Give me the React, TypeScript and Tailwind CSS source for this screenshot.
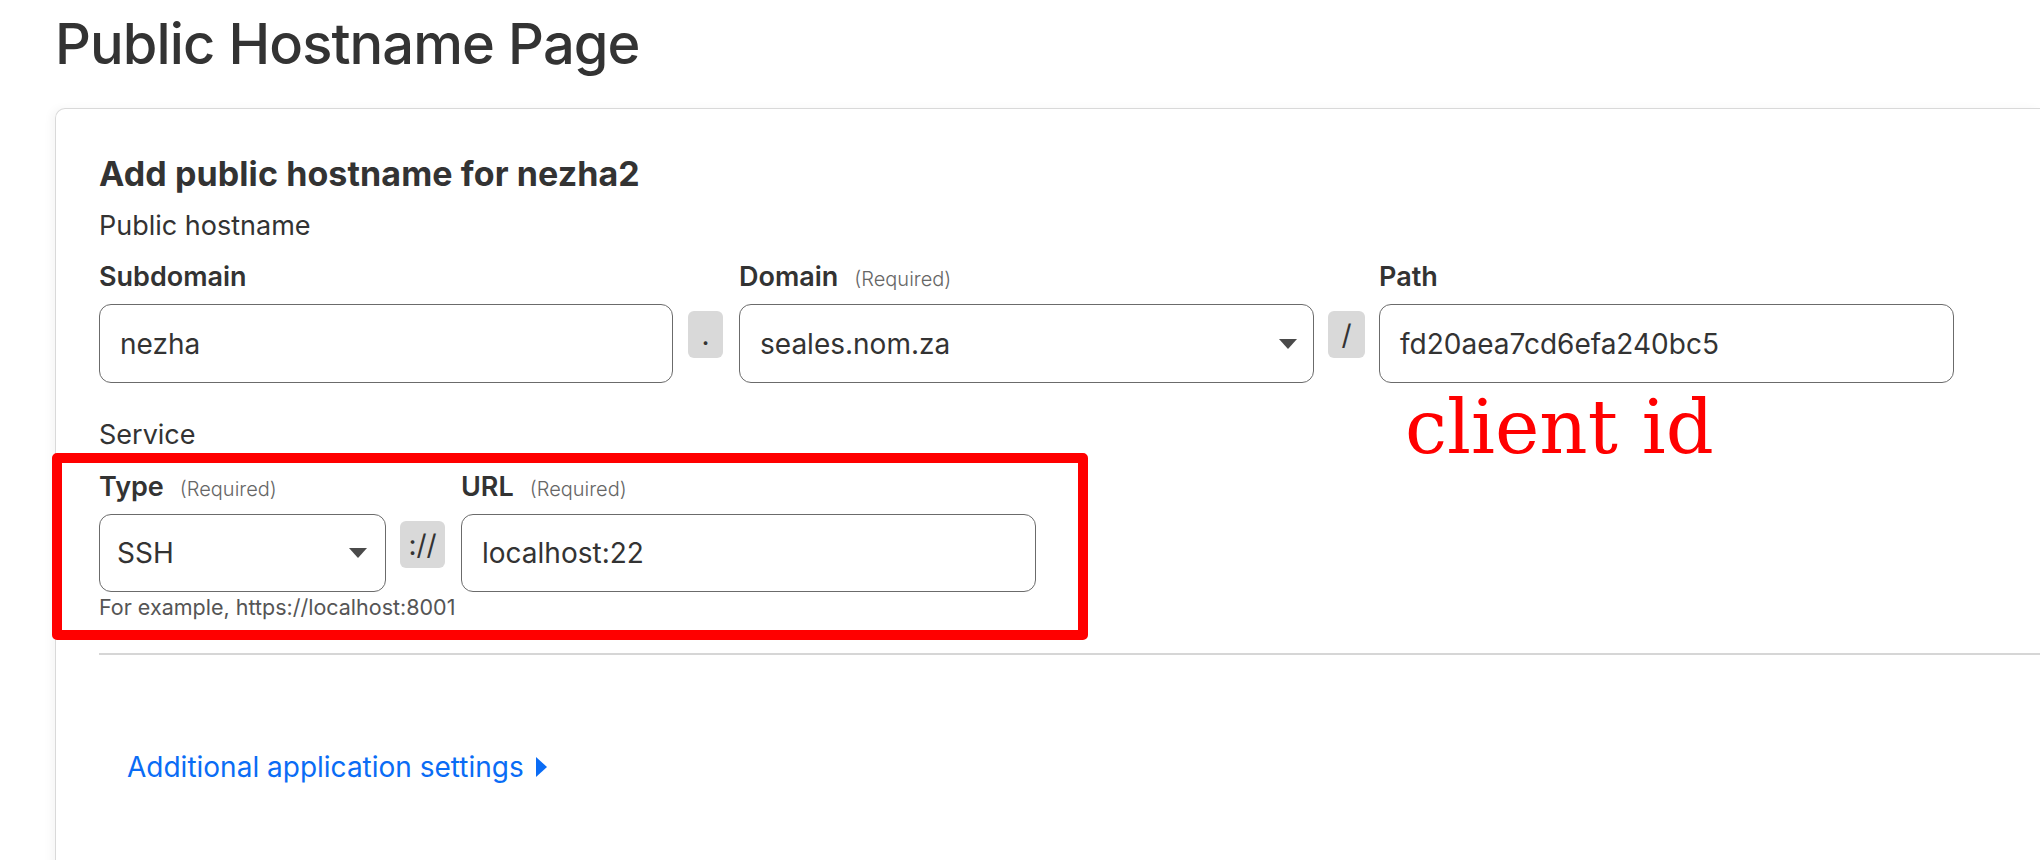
import React from 'react';

const Caret: React.FC = () => (
  <svg width="18" height="10" viewBox="0 0 18 10" className="shrink-0">
    <polygon points="0,0 18,0 9,10" fill="#4a4a4a" />
  </svg>
);

const Label: React.FC<{ text: string; required?: boolean }> = ({ text, required }) => (
  <div className="mb-[10px] flex items-baseline h-[35px]">
    <span className="text-[27px] leading-[35px] font-semibold">{text}</span>
    {required && <span className="ml-[16px] text-[20px] font-light text-[#666]">(Required)</span>}
  </div>
);

const Sep: React.FC<{ text: string; w: string }> = ({ text, w }) => (
  <div className="pt-[52px]">
    <div className={`${w} h-[47px] rounded-[6px] bg-[#d9d9d9] flex items-center justify-center text-[28px] text-[#333]`}>
      {text}
    </div>
  </div>
);

const App: React.FC = () => {
  return (
    <div className="relative h-[860px] overflow-hidden bg-white font-['Inter',sans-serif] text-[#333]">
      <div className="pl-[55px] pt-[11px]">
        <h1 className="text-[56px] leading-[67px] font-medium tracking-[-0.9px]">Public Hostname Page</h1>

        {/* Card */}
        <div className="mt-[30px] min-h-[800px] rounded-tl-[10px] border-l border-t border-[#d9d9d9] pl-[43px] pt-[44px] shadow-[-4px_0_8px_rgba(0,0,0,0.04)]">
          <h2 className="text-[34px] leading-[42px] font-bold tracking-[0.1px]">Add public hostname for nezha2</h2>
          <div className="mt-[13px] text-[27px] leading-[35px]">Public hostname</div>

          {/* hostname row */}
          <div className="mt-[16px] flex items-start">
            <div className="w-[574px]">
              <Label text="Subdomain" />
              <div className="h-[79px] rounded-[12px] border border-[#6b6b6b] px-5 flex items-center text-[28px]">nezha</div>
            </div>
            <div className="ml-[15px] mr-[16px]">
              <Sep text="." w="w-[35px]" />
            </div>
            <div className="w-[575px]">
              <Label text="Domain" required />
              <div className="h-[79px] rounded-[12px] border border-[#6b6b6b] pl-5 pr-[16px] flex items-center justify-between text-[28px]">
                <span>seales.nom.za</span>
                <Caret />
              </div>
            </div>
            <div className="mx-[14px]">
              <Sep text="/" w="w-[37px]" />
            </div>
            <div className="w-[575px]">
              <Label text="Path" />
              <div className="h-[79px] rounded-[12px] border border-[#6b6b6b] px-5 flex items-center text-[28px]">fd20aea7cd6efa240bc5</div>
            </div>
          </div>

          <div className="mt-[34px] text-[27px] leading-[35px]">Service</div>

          {/* service row */}
          <div className="mt-[17px] flex items-start">
            <div className="w-[287px]">
              <Label text="Type" required />
              <div className="h-[78px] rounded-[12px] border border-[#6b6b6b] pl-[17px] pr-[18px] flex items-center justify-between text-[28px]">
                <span>SSH</span>
                <Caret />
              </div>
              <div className="mt-[2px] whitespace-nowrap text-[21.5px] leading-[26px] text-[#555]">For example, https://localhost:8001</div>
            </div>
            <div className="ml-[14px] mr-[16px]">
              <Sep text="://" w="w-[45px]" />
            </div>
            <div className="w-[575px]">
              <Label text="URL" required />
              <div className="h-[78px] rounded-[12px] border border-[#6b6b6b] px-5 flex items-center text-[28px]">localhost:22</div>
            </div>
          </div>

          <div className="mt-[33px] border-t-2 border-[#d6d6d6]" />

          <button className="mt-[94px] ml-[28px] flex items-center gap-[12px] text-[28px] leading-[36px] text-[#0a6cf5]">
            <span>Additional application settings</span>
            <svg width="11" height="20" viewBox="0 0 11 20">
              <polygon points="0,0 11,10 0,20" fill="#0a6cf5" />
            </svg>
          </button>
        </div>
      </div>

      {/* annotations */}
      <div className="absolute left-[52px] top-[453px] w-[1036px] h-[187px] rounded-[5px] border-[10px] border-[#ff0000]" />
      <div className="absolute left-[1405px] top-[390px] font-['DejaVu_Serif',serif] text-[75px] leading-[75px] text-[#ff0000]">client id</div>
    </div>
  );
};

export default App;
